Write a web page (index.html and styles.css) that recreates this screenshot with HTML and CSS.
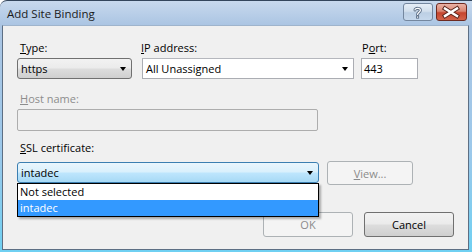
FILE: index.html
```html
<!DOCTYPE html>
<html>
  <head>
    <meta charset="utf-8">
    <title>Add Site Binding</title>
    <link rel="stylesheet" href="styles.css">
  </head>
  <body>
    <div class="dialog">
      <div class="titlebar">
        <span class="caption">Add Site Binding</span>
        <div class="caption-buttons">
          <span class="cbtn help">
            <svg width="29" height="18" viewBox="0 0 29 18">
              <path d="M12 7 C12 4.8 17.4 4.8 17.4 7.2 C17.4 9.2 14.6 9.2 14.6 11.4" fill="none" stroke="#5c6e86" stroke-width="3" stroke-linecap="round"/>
              <rect x="13.1" y="12.6" width="3" height="3" fill="#5c6e86"/>
              <path d="M12 7 C12 4.8 17.4 4.8 17.4 7.2 C17.4 9.2 14.6 9.2 14.6 11.4" fill="none" stroke="#fff" stroke-width="1.2" stroke-linecap="round"/>
              <rect x="14" y="13.5" width="1.2" height="1.2" fill="#fff"/>
            </svg>
          </span>
          <span class="cbtn close">
            <svg width="30" height="18" viewBox="0 0 30 18">
              <path d="M9 5.5 L21 13 M21 5.5 L9 13" fill="none" stroke="#5a241b" stroke-width="4.4" stroke-linecap="square"/>
              <path d="M9 5.5 L21 13 M21 5.5 L9 13" fill="none" stroke="#fff" stroke-width="2.4" stroke-linecap="square"/>
            </svg>
          </span>
        </div>
      </div>

      <div class="client">
        <div class="row-top">
          <div class="field field-type">
            <label class="label"><u>T</u>ype:</label>
            <div class="combo">
              <span>https</span>
              <span class="arrow"></span>
            </div>
          </div>
          <div class="field field-ip">
            <label class="label"><u>I</u>P address:</label>
            <div class="edit-combo">
              <span>All Unassigned</span>
              <span class="arrow"></span>
            </div>
          </div>
          <div class="field field-port">
            <label class="label">P<u>o</u>rt:</label>
            <div class="textbox">443</div>
          </div>
        </div>

        <label class="label label-disabled host-label"><u>H</u>ost name:</label>
        <div class="textbox textbox-disabled host-input"></div>

        <label class="label ssl-label"><u>S</u>SL certificate:</label>
        <div class="row-ssl">
          <div class="combo-wrap">
            <div class="combo combo-open">
              <span>intadec</span>
              <span class="arrow"></span>
            </div>
            <ul class="dropdown">
              <li>Not selected</li>
              <li class="selected">intadec</li>
            </ul>
          </div>
          <button class="btn view-btn" disabled><u>V</u>iew...</button>
        </div>

        <div class="row-buttons">
          <button class="btn" disabled>OK</button>
          <button class="btn">Cancel</button>
        </div>
      </div>
    </div>
  </body>
</html>
```

FILE: styles.css
```css
html, body {
  margin: 0;
  padding: 0;
}

body {
  font-family: "Open Sans", "Noto Sans", sans-serif;
  font-size: 11px;
  color: #000;
}

.dialog {
  box-sizing: border-box;
  width: 472px;
  height: 252px;
  display: flex;
  flex-direction: column;
  padding: 0 3px 2px 2px;
  border-top: 1px solid #34465c;
  border-top-left-radius: 7px;
  background: linear-gradient(#c8d9ed 0, #abc5e3 24px, #9cc8ea 60%, #6fd0f2 100%);
}

.titlebar {
  height: 24px;
  display: flex;
  align-items: flex-start;
  justify-content: space-between;
}

.caption {
  font-size: 11.5px;
  line-height: 16px;
  padding: 5px 0 0 5px;
  color: #1b1b1b;
}

.caption-buttons {
  display: flex;
  gap: 3px;
  padding-top: 2px;
  margin-right: 2px;
}

.cbtn {
  box-sizing: border-box;
  display: block;
  height: 18px;
  border-radius: 3px;
}
.cbtn svg { display: block; margin: -1px; }

.help {
  width: 30px;
  border: 1px solid #74879f;
  background: linear-gradient(#e6eef7 0, #d2dfed 45%, #bccfe4 55%, #c6d8ec 100%);
}

.close {
  width: 31px;
  border: 1px solid #6e2a20;
  background: linear-gradient(#eab3a6 0, #d98470 45%, #c6452e 55%, #d2634a 100%);
}

.client {
  flex: 1;
  display: flex;
  flex-direction: column;
  background: #f0f0f0;
  border: 1px solid #5d6f84;
  border-top-color: #9fb4cc;
  padding: 14px 14px 12px 14px;
}

.label {
  display: block;
  line-height: 15px;
  white-space: nowrap;
}
.label u { text-decoration-thickness: 1px; text-underline-offset: 1px; }

.label-disabled { color: #8d8d8d; }

.row-top {
  display: flex;
}

.field-type { width: 115px; margin-right: 9px; }
.field-type .label { padding-left: 3px; }
.field-ip { width: 213px; margin-right: 7px; }
.field-port { width: 57px; }
.field-port .label { padding-left: 1px; }

.combo, .edit-combo, .textbox {
  box-sizing: border-box;
  position: relative;
  height: 21px;
  margin-top: 3px;
  line-height: 19px;
  white-space: nowrap;
}

.combo {
  border: 1px solid #707070;
  border-radius: 3px;
  padding-left: 3px;
  background: linear-gradient(#f2f2f2 0, #ebebeb 48%, #dddddd 52%, #cfcfcf 100%);
}

.combo-open {
  border-color: #3c7fb1;
  background: linear-gradient(#eaf6fd 0, #d9f0fc 48%, #bee6fd 52%, #a7d9f5 100%);
}

.edit-combo {
  margin-left: 1px;
  border: 1px solid #abadb3;
  border-top-color: #b5b7bd;
  background: #fff;
  padding-left: 3px;
}

.textbox {
  border: 1px solid #abadb3;
  background: #fff;
  padding-left: 2px;
}

.arrow {
  position: absolute;
  right: 5px;
  top: 8px;
  width: 0;
  height: 0;
  border-left: 3.5px solid transparent;
  border-right: 3.5px solid transparent;
  border-top: 4px solid #000;
}

.host-label {
  margin-top: 12px;
  padding-left: 3px;
}

.host-input {
  width: 301px;
  height: 22px;
  background: #f0f0f0;
  border-color: #adadad;
  border-radius: 2px;
}

.ssl-label {
  margin-top: 9px;
  padding-left: 3px;
}

.row-ssl {
  display: flex;
  align-items: flex-start;
  gap: 8px;
  margin-top: 4px;
}

.combo-wrap {
  position: relative;
  width: 302px;
}

.dropdown {
  position: absolute;
  left: 0;
  right: 0;
  top: 24px;
  margin: 0;
  padding: 0;
  list-style: none;
  background: #fff;
  border: 1px solid #000;
  box-shadow: 2px 2px 2px rgba(0, 0, 0, 0.3);
}

.dropdown li {
  height: 16px;
  line-height: 16px;
  padding-left: 2px;
}

.dropdown .selected {
  background: #3399ff;
  color: #fff;
}

.btn {
  box-sizing: border-box;
  width: 90px;
  height: 25px;
  padding: 0;
  font: inherit;
  color: #000;
  border: 1px solid #707070;
  border-radius: 3px;
  background: linear-gradient(#f2f2f2 0, #ebebeb 48%, #dddddd 52%, #cfcfcf 100%);
}

.btn:disabled {
  color: #8b8b8b;
  border-color: #adb2b5;
  background: #f4f4f4;
}

.view-btn {
  width: 86px;
  height: 24px;
  margin-top: 2px;
}

.row-buttons {
  margin-top: auto;
  display: flex;
  justify-content: flex-end;
  gap: 11px;
}
```
